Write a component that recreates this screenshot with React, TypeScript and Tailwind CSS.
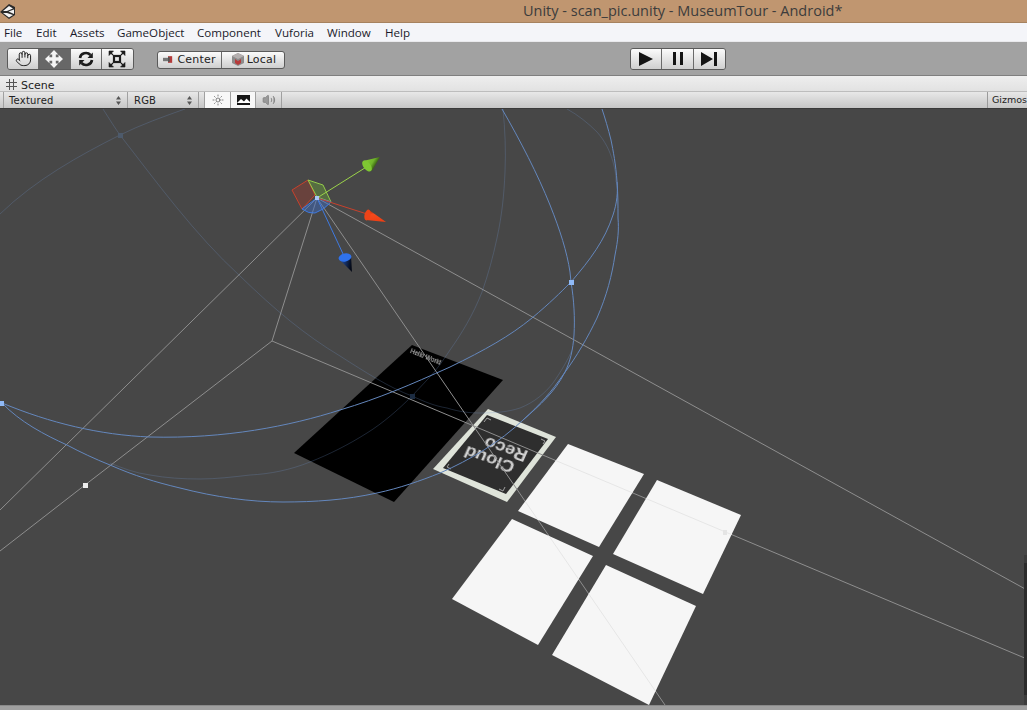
import React from "react";
import { Hand, Sun, Volume2 } from "lucide-react";

const MENU = [
  { label: "File", width: "w-[32px]" },
  { label: "Edit", width: "w-[34px]" },
  { label: "Assets", width: "w-[47px]" },
  { label: "GameObject", width: "w-[80px]" },
  { label: "Component", width: "w-[78px]" },
  { label: "Vuforia", width: "w-[52px]" },
  { label: "Window", width: "w-[58px]" },
  { label: "Help", width: "w-[40px]" },
];

const MoveIcon = () => (
  <svg width="18" height="18" viewBox="0 0 17 17" fill="#f4f4f4">
    <path d="M8.5 0 L12.5 4.2 H10.2 V6.8 H12.8 V4.5 L17 8.5 L12.8 12.5 V10.2 H10.2 V12.8 H12.5 L8.5 17 L4.5 12.8 H6.8 V10.2 H4.2 V12.5 L0 8.5 L4.2 4.5 V6.8 H6.8 V4.2 H4.5 Z" />
  </svg>
);

const RotateIcon = () => (
  <svg width="16" height="16" viewBox="0 0 16 16" fill="none" stroke="#1c1c1c" strokeWidth="2.6">
    <path d="M2 7 A6 5.5 0 0 1 12.5 4" />
    <path d="M14 9 A6 5.5 0 0 1 3.5 12" />
    <path d="M14.8 1.5 V7 H9.5 Z" fill="#1c1c1c" stroke="none" />
    <path d="M1.2 14.5 V9 H6.5 Z" fill="#1c1c1c" stroke="none" />
  </svg>
);

const ScaleIcon = () => (
  <svg width="18" height="18" viewBox="0 0 18 18" fill="none" stroke="#1c1c1c">
    <rect x="6" y="6" width="6" height="6" strokeWidth="2.2" />
    <path d="M1 1 H5.5 L1 5.5 Z M17 1 H12.5 L17 5.5 Z M1 17 H5.5 L1 12.5 Z M17 17 H12.5 L17 12.5 Z" fill="#1c1c1c" strokeWidth="0.6" />
    <path d="M2 2 L5 5 M16 2 L13 5 M2 16 L5 13 M16 16 L13 13" strokeWidth="1.2" />
  </svg>
);

const CenterIcon = () => (
  <svg width="10" height="7" viewBox="0 0 12 8">
    <rect x="0" y="2" width="6" height="4" fill="#777" />
    <rect x="6" y="0" width="5" height="8" fill="#b33a3a" />
    <rect x="6" y="1" width="2" height="6" fill="#555" />
  </svg>
);

const LocalIcon = () => (
  <svg width="12" height="13" viewBox="0 0 12 13">
    <path d="M6 0 L12 3 V10 L6 13 L0 10 V3 Z" fill="#8c8c8c" />
    <path d="M0 3 L6 6 L12 3 L6 0 Z" fill="#b5b0b0" />
    <path d="M3 6 L6 8 L9 6 V10 L6 12 L3 10 Z" fill="#b73a3a" />
  </svg>
);

const PictureIcon = () => (
  <svg width="13" height="10" viewBox="0 0 13 10">
    <rect width="13" height="10" fill="#161616" />
    <path d="M0 8 L4 4 L7 6.5 L9.5 3.5 L13 7 V8 H0 Z" fill="#fff" />
  </svg>
);

const GridIcon = () => (
  <svg width="11" height="11" viewBox="0 0 11 11" stroke="#555" strokeWidth="1" className="mt-[2px]">
    <path d="M3.5 0 V11 M7.5 0 V11 M0 3.5 H11 M0 7.5 H11" />
  </svg>
);

const UpDownArrows = () => (
  <svg width="5" height="9" viewBox="0 0 5 9" fill="#555">
    <path d="M2.5 0 L5 3.5 H0 Z M2.5 9 L5 5.5 H0 Z" />
  </svg>
);

const ToolButton = ({ active, children, last }: { active?: boolean; children: React.ReactNode; last?: boolean }) => (
  <div
    className={`flex h-full w-[32px] items-center justify-center ${last ? "" : "border-r border-[#6a6a6a]"} ${
      active ? "bg-[#676767]" : "bg-linear-to-b from-[#fbfbfb] to-[#cfcfcf]"
    }`}
  >
    {children}
  </div>
);

const SceneDropdown = ({ label, width }: { label: string; width: string }) => (
  <div className={`flex h-full items-center justify-between border-r border-[#a0a0a0] pl-[5px] pr-[6px] ${width}`}>
    <span>{label}</span>
    <UpDownArrows />
  </div>
);

// lines of the scene view, in page coordinates
const GREY_LINES = [
  "317,198 0,510",
  "317,198 272,341 85,485 0,551",
  "272,341 1027,659",
  "317,198 1027,590",
  "317,198 665,705",
];

const BLUE_CURVES = [
  "M2 403 C50 423 100 435 150 437 C225 439 290 426 340 410 C380 398 410 385 450 367 C485 350 510 336 532 318 C550 303 560 293 571 282 C590 260 605 240 613 215 C617 203 618 192 617 182",
  "M2 403 C20 422 45 435 67 445 C80 452 95 459 110 465 C135 476 155 482 180 488 C215 497 250 502 283 502 C315 502 345 500 377 493 C400 488 420 481 440 473 C470 460 500 442 523 420 C540 405 552 391 563 375 C577 356 588 337 597 318 C607 295 612 275 615 255 C618 240 619 230 618 218 C618 205 618 195 617 182 C616 165 613 150 611 140 C608 128 605 118 602 109",
  "M502 109 C520 140 538 175 550 205 C560 230 567 252 570 272 L571 282 C574 300 575 318 574 335 C573 350 570 362 565 372 C555 392 540 405 523 420",
];

const FAINT_CURVES = [
  "M0 214 C35 180 80 155 120 135 C140 125 165 116 185 109",
  "M103 109 C110 120 115 128 120 135 C155 180 195 235 240 276 C275 310 305 335 340 356 C365 372 390 388 412 396 C425 402 435 406 447 408 C460 412 470 413 480 413 C495 413 508 412 520 408 C535 402 545 393 553 383 C560 373 568 360 572 350",
  "M503 109 C505 130 506 150 505 172 C504 195 502 215 497 238 C493 257 488 275 482 292 C473 315 462 333 450 350 C442 362 435 372 427 380 L412 396 C398 410 383 423 367 433 C348 445 330 454 310 462 C290 470 270 474 250 475 C233 477 216 479 200 479 C183 479 166 478 150 475 C135 473 122 468 110 463",
  "M567 109 C578 115 588 123 597 132 C605 141 610 151 613 162 C615 169 616 175 616 182",
];

const WHITE_QUADS = [
  "568,444 644,474 599,547 518,511",
  "657,480 741,515 703,594 613,554",
  "512,519 593,556 538,645 452,599",
  "606,565 696,606 649,705 552,655",
];

const SceneView = () => (
  <svg width="1027" height="596" viewBox="0 109 1027 596" className="block" fontFamily="'Liberation Sans', sans-serif">
    <defs>
      <clipPath id="whiteQuads">
        {WHITE_QUADS.map((points) => (
          <polygon key={points} points={points} />
        ))}
      </clipPath>
      <linearGradient id="greenCone" x1="0" y1="0" x2="1" y2="0.5">
        <stop offset="0" stopColor="#8fd43c" />
        <stop offset="0.6" stopColor="#6fb52a" />
        <stop offset="1" stopColor="#101c04" />
      </linearGradient>
      <linearGradient id="redCone" x1="0.3" y1="0" x2="0.5" y2="1">
        <stop offset="0" stopColor="#a52a10" />
        <stop offset="0.35" stopColor="#f44a1c" />
        <stop offset="1" stopColor="#ee3f14" />
      </linearGradient>
      <linearGradient id="blueCone" x1="0" y1="0" x2="1" y2="0.2">
        <stop offset="0" stopColor="#2a5fc4" />
        <stop offset="1" stopColor="#050a18" />
      </linearGradient>
    </defs>

    {/* image target and marker */}
    <polygon points="412,345 503,380 394,502 294,453" fill="#000" />
    <text transform="translate(411,350) rotate(22)" fontSize="6.3" fill="#d8d8d8" y="3" className="blur-[0.3px]">
      Hello World
    </text>
    <polygon points="488,409 556,437 507,502 433,469" fill="#dfe4da" />
    <polygon points="487,415 548,439 506,494 443,468" fill="#2e2e2e" />
    <path
      d="M484 422 L487 418 L491 420 M541 439 L545 441 L543 444 M505 487 L503 491 L499 489 M449 464 L447 467 L451 469"
      fill="none"
      stroke="#a0a0a0"
      strokeWidth="1"
    />
    <g
      transform="matrix(-1.15,-0.4,0.45,-1,494,456)"
      fill="#d0d0d0"
      fontSize="15"
      fontWeight="700"
      textAnchor="middle"
      className="blur-[0.4px]"
    >
      <text x="2.4" y="0.5">
        Cloud
      </text>
      <text x="-6.6" y="15">
        Reco
      </text>
    </g>

    {/* camera frustum */}
    <g fill="none" stroke="#8e8e8e" strokeWidth="1">
      {GREY_LINES.map((points) => (
        <polyline key={points} points={points} />
      ))}
    </g>

    {/* light range circles */}
    <g fill="none" stroke="#6f93cb" strokeOpacity="0.25" strokeWidth="1">
      {FAINT_CURVES.map((d) => (
        <path key={d} d={d} />
      ))}
    </g>
    <g fill="none" stroke="#6487bd" strokeWidth="1">
      {BLUE_CURVES.map((d) => (
        <path key={d} d={d} />
      ))}
    </g>
    <rect x="118" y="133" width="5" height="5" fill="#4d5a6b" />
    <rect x="410" y="394" width="5" height="5" fill="#1c2c42" />
    <rect x="569" y="280" width="5" height="5" fill="#8fb9f6" />
    <rect x="0" y="401" width="4" height="5" fill="#8fb9f6" />
    <rect x="83" y="483" width="5" height="5" fill="#eeeeee" />

    {/* plane tiles */}
    {WHITE_QUADS.map((points) => (
      <polygon key={points} points={points} fill="#f6f6f6" />
    ))}
    <g clipPath="url(#whiteQuads)" fill="none" stroke="#e6e6e6" strokeWidth="1">
      <polyline points="272,341 1027,659" />
      <polyline points="317,198 665,705" />
      <rect x="723" y="530" width="4" height="5" fill="#e4e4e4" stroke="none" />
    </g>

    {/* move gizmo */}
    <path d="M292 190 L308 180 L315 195 L302 209 Z" fill="#a83a2c" fillOpacity="0.35" stroke="#c8412c" />
    <path d="M308 180 L323 185 L331 202 L317 197 Z" fill="#6da83a" fillOpacity="0.4" stroke="#93cc4a" />
    <path d="M302 209 Q309 214 315 213 Q324 210 331 202 L317 198 Z" fill="#3c6cc8" fillOpacity="0.45" stroke="#3f7ae0" />
    <line x1="317" y1="198" x2="368" y2="166" stroke="#9bd34a" />
    <line x1="317" y1="198" x2="367" y2="214" stroke="#c8412c" />
    <line x1="317" y1="198" x2="344" y2="256" stroke="#3f7ae0" />
    <rect x="315" y="196" width="4" height="4" fill="#a9c8f5" />
    <polygon points="380,157 363,161 372,171" fill="url(#greenCone)" />
    <ellipse cx="367" cy="166" rx="6.5" ry="3.5" fill="#7fc832" transform="rotate(52 367 166)" />
    <polygon points="386,222 369,210 366,220" fill="url(#redCone)" />
    <ellipse cx="367.5" cy="215" rx="3" ry="5.5" fill="#ee4318" transform="rotate(15 367.5 215)" />
    <polygon points="352,272 339,259 351,256" fill="url(#blueCone)" />
    <ellipse cx="345" cy="257.5" rx="6.5" ry="4" fill="#2f72ec" transform="rotate(-12 345 257.5)" />

    {/* scrollbar sliver on the right edge */}
    <rect x="1024" y="555" width="3" height="8" fill="#3c3c3c" />
    <rect x="1024" y="563" width="3" height="132" fill="#2c2c2c" />
    <rect x="1024" y="695" width="3" height="10" fill="#3c3c3c" />
  </svg>
);

export default function App() {
  return (
    <div className="flex h-[710px] w-[1027px] flex-col overflow-hidden bg-[#474747] font-['DejaVu_Sans',sans-serif]">
      {/* title bar */}
      <div className="relative flex h-[23px] shrink-0 items-center border-b border-[#a6825f] bg-[#c09670]">
        <svg width="16" height="16" viewBox="0 0 16 16" className="absolute left-0 top-[4px]">
          <path d="M9 0 L15 3 V11 L9 15 L0 8 Z" fill="#2a2a2a" />
          <path d="M9 2 L13 4.5 L7 7 H3 Z M3 9 H7 L13 11 L9 13.5 Z M8.5 7.5 L14 5.5 V10 Z" fill="#f4f4f4" />
        </svg>
        <span className="ml-[523px] font-['Open_Sans',sans-serif] text-[14.5px] leading-none text-[#3c3c3c]">
          Unity - scan_pic.unity - MuseumTour - Android*
        </span>
      </div>

      {/* menu bar */}
      <div className="flex h-[19px] shrink-0 items-center border-b border-[#e9e9ec] bg-[#f4f5f9] pl-[4px] pt-[2px] font-['Open_Sans',sans-serif] text-[11.6px] text-[#1a1a2a]">
        {MENU.map((item) => (
          <span key={item.label} className={item.width}>
            {item.label}
          </span>
        ))}
      </div>

      {/* main toolbar */}
      <div className="flex h-[34px] shrink-0 items-center border-b border-[#7f7f7f] bg-[#a2a2a2] pl-[7px] text-[11px] tracking-[0.2px] text-[#222]">
        <div className="flex h-[22px] w-[127px] overflow-hidden rounded-[3px] border border-[#5a5a5a]">
          <ToolButton>
            <Hand size={17} strokeWidth={1.4} color="#1c1c1c" />
          </ToolButton>
          <ToolButton active>
            <MoveIcon />
          </ToolButton>
          <ToolButton>
            <RotateIcon />
          </ToolButton>
          <ToolButton last>
            <ScaleIcon />
          </ToolButton>
        </div>

        <div className="ml-[23px] mt-[2px] flex h-[18px] w-[128px] overflow-hidden rounded-[3px] border border-[#5a5a5a] bg-linear-to-b from-[#fbfbfb] to-[#cfcfcf]">
          <div className="flex w-[64px] items-center justify-center gap-[4px] border-r border-[#6a6a6a]">
            <CenterIcon />
            <span className="pt-[1px]">Center</span>
          </div>
          <div className="flex flex-1 items-center justify-center gap-[3px] pl-[2px]">
            <LocalIcon />
            <span className="pt-[1px]">Local</span>
          </div>
        </div>

        <div className="ml-[345px] flex h-[22px] w-[96px] overflow-hidden rounded-[3px] border border-[#5a5a5a]">
          <ToolButton>
            <svg width="16" height="14" viewBox="0 0 16 14" fill="#141414">
              <path d="M1 0 L15 7 L1 14 Z" />
            </svg>
          </ToolButton>
          <ToolButton>
            <svg width="10" height="13" viewBox="0 0 10 13" fill="#141414">
              <path d="M0 0 H3 V13 H0 Z M7 0 H10 V13 H7 Z" />
            </svg>
          </ToolButton>
          <ToolButton last>
            <svg width="16" height="14" viewBox="0 0 16 14" fill="#141414">
              <path d="M0 0 L12 7 L0 14 Z M13 0 H16 V14 H13 Z" />
            </svg>
          </ToolButton>
        </div>
      </div>

      {/* tab row */}
      <div className="flex h-[16px] shrink-0 items-center gap-[4px] border-b border-[#bdbdbd] bg-linear-to-b from-[#eeeeee] to-[#e2e2e2] pl-[6px] text-[11px] text-[#222]">
        <GridIcon />
        <span className="mt-[3px] leading-none">Scene</span>
      </div>

      {/* scene toolbar */}
      <div className="flex h-[17px] shrink-0 items-stretch border-b border-[#3a3a3a] bg-linear-to-b from-[#e8e8e8] to-[#c6c6c6] pl-[3px] text-[10px] tracking-[0.2px] text-[#222]">
        <SceneDropdown label="Textured" width="w-[125px] border-l" />
        <SceneDropdown label="RGB" width="w-[71px] pl-[6px]" />
        <div className="ml-[5px] flex w-[27px] items-center justify-center border-x border-[#a0a0a0] bg-[#f8f8f8]">
          <Sun size={12} strokeWidth={1.2} color="#333" />
        </div>
        <div className="flex w-[25px] items-center justify-center border-r border-[#a0a0a0] bg-[#f8f8f8]">
          <PictureIcon />
        </div>
        <div className="flex w-[26px] items-center justify-center border-r border-[#a0a0a0]">
          <Volume2 size={14} strokeWidth={1.4} color="#7d7d7d" fill="#9a9a9a" />
        </div>
        <div className="ml-auto flex w-[40px] items-center whitespace-nowrap border-l border-[#9a9a9a] pl-[4px] text-[9.5px] tracking-normal">
          Gizmos
        </div>
      </div>

      {/* scene view */}
      <div className="h-[596px] shrink-0">
        <SceneView />
      </div>

      {/* bottom edge */}
      <div className="flex-1 border-t border-[#8a8a8a] bg-[#a0a0a0]" />
    </div>
  );
}
